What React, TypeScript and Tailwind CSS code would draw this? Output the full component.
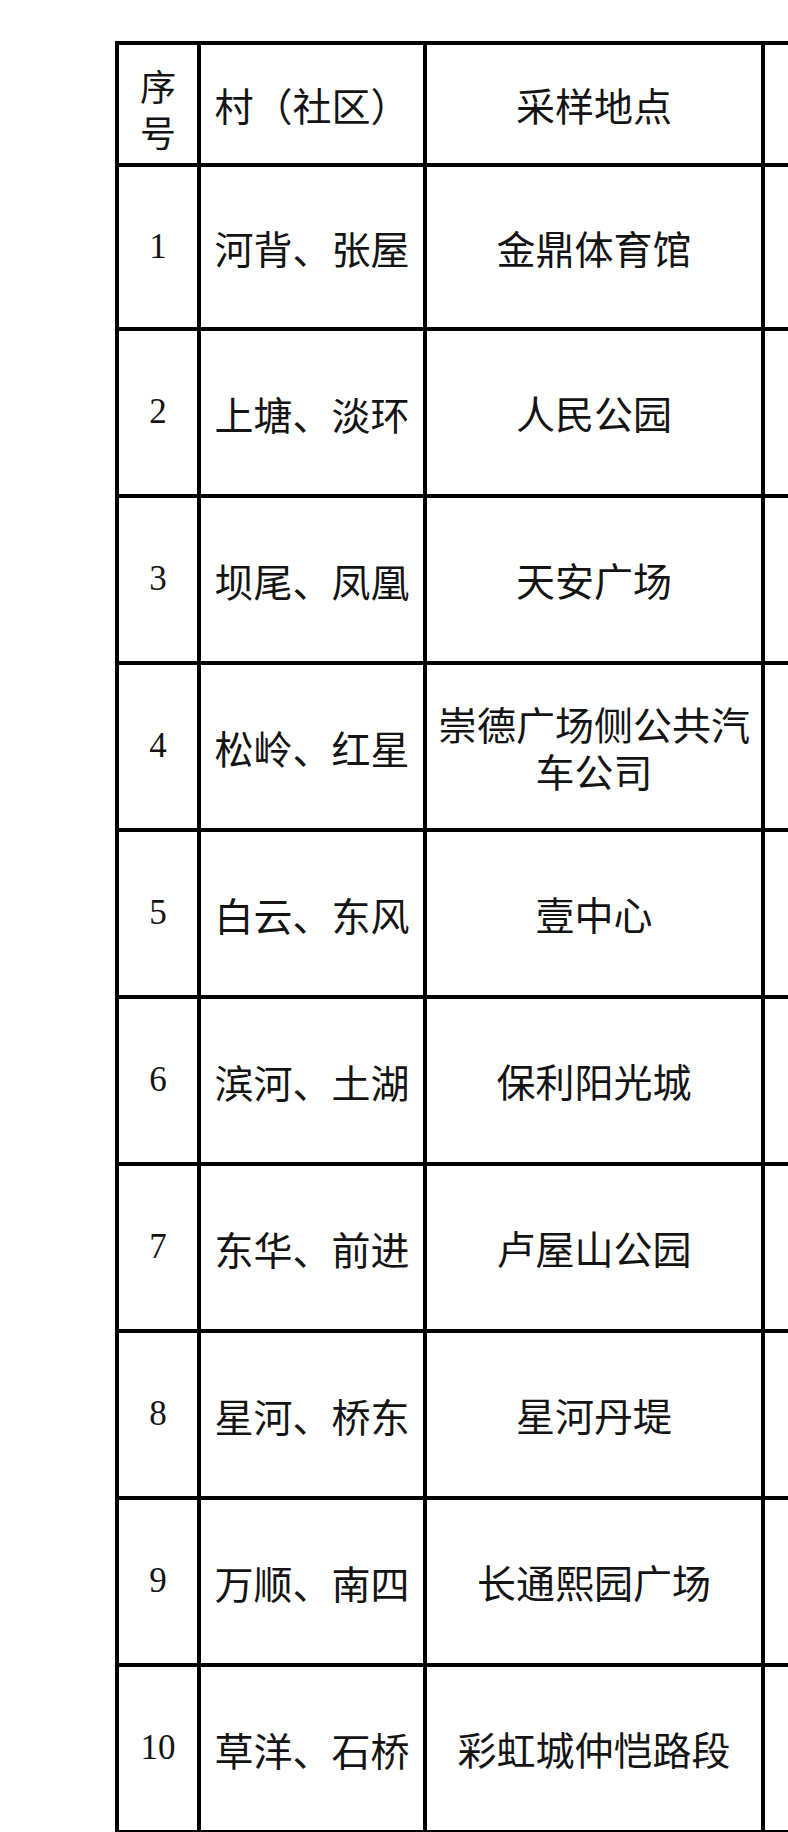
const rows: { no: string; village: string; place: string[]; h: string }[] = [
  { no: "1", village: "河背、张屋", place: ["金鼎体育馆"], h: "h-[164px]" },
  { no: "2", village: "上塘、淡环", place: ["人民公园"], h: "h-[167px]" },
  { no: "3", village: "坝尾、凤凰", place: ["天安广场"], h: "h-[167px]" },
  { no: "4", village: "松岭、红星", place: ["崇德广场侧公共汽", "车公司"], h: "h-[167px]" },
  { no: "5", village: "白云、东风", place: ["壹中心"], h: "h-[167px]" },
  { no: "6", village: "滨河、土湖", place: ["保利阳光城"], h: "h-[167px]" },
  { no: "7", village: "东华、前进", place: ["卢屋山公园"], h: "h-[167px]" },
  { no: "8", village: "星河、桥东", place: ["星河丹堤"], h: "h-[167px]" },
  { no: "9", village: "万顺、南四", place: ["长通熙园广场"], h: "h-[167px]" },
  { no: "10", village: "草洋、石桥", place: ["彩虹城仲恺路段"], h: "h-[167px]" },
];

const cell =
  "flex flex-col items-center justify-center border-r-4 border-b-4 border-black text-center";
const cjk = "font-['Noto_Sans_CJK_SC',sans-serif] text-[#141414]";

export default function App() {
  return (
    <div className="h-[1832px] w-[788px] overflow-hidden bg-white">
      <div className="ml-[115px] mt-[41px] grid w-[760px] grid-cols-[82px_226px_338px_114px] border-l-4 border-t-4 border-black">
        {/* header */}
        <div className={`${cell} h-[122px] pt-[8px] ${cjk} text-[36px] leading-[46px]`}>
          <span>序</span>
          <span>号</span>
        </div>
        <div className={`${cell} h-[122px] ${cjk} text-[39px] leading-[46px]`}>
          村（社区）
        </div>
        <div className={`${cell} h-[122px] ${cjk} text-[39px] leading-[46px]`}>
          采样地点
        </div>
        <div className={`${cell} h-[122px]`} />

        {rows.map((r) => (
          <div key={r.no} className="contents">
            <div
              className={`${cell} ${r.h} font-['Liberation_Serif',serif] text-[35px] text-[#141414]`}
            >
              {r.no}
            </div>
            <div className={`${cell} ${r.h} ${cjk} text-[39px] leading-[46px]`}>
              {r.village}
            </div>
            <div className={`${cell} ${r.h} ${cjk} text-[39px] leading-[47px]`}>
              {r.place.map((line) => (
                <span key={line}>{line}</span>
              ))}
            </div>
            <div className={`${cell} ${r.h}`} />
          </div>
        ))}
      </div>
    </div>
  );
}
